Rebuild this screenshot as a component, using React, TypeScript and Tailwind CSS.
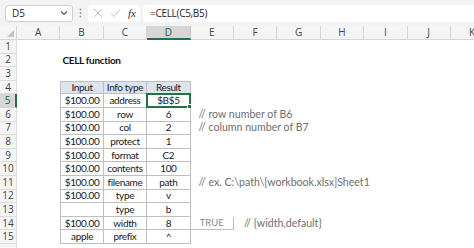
import React from "react";

const cols = ["A", "B", "C", "D", "E", "F", "G", "H", "I", "J", "K"];

type Row = {
  n: number;
  cells?: [string, string, string] | null;
  header?: boolean;
  e?: React.ReactNode;
  f?: React.ReactNode;
  title?: string;
};

const rows: Row[] = [
  { n: 1 },
  { n: 2, title: "CELL function" },
  { n: 3 },
  { n: 4, cells: ["Input", "Info type", "Result"], header: true },
  { n: 5, cells: ["$100.00", "address", "$B$5"] },
  { n: 6, cells: ["$100.00", "row", "6"], e: "// row number of B6" },
  { n: 7, cells: ["$100.00", "col", "2"], e: "// column number of B7" },
  { n: 8, cells: ["$100.00", "protect", "1"] },
  { n: 9, cells: ["$100.00", "format", "C2"] },
  { n: 10, cells: ["$100.00", "contents", "100"] },
  { n: 11, cells: ["$100.00", "filename", "path"], e: "// ex. C:\\path\\[workbook.xlsx]Sheet1" },
  { n: 12, cells: ["$100.00", "type", "v"] },
  { n: 13, cells: ["", "type", "b"] },
  { n: 14, cells: ["$100.00", "width", "8"], f: "// {width,default}" },
  { n: 15, cells: ["apple", "prefix", "^"] },
  { n: 16 },
];

const cellFont = { fontFamily: "Lato, 'Open Sans', sans-serif" };
const uiFont = { fontFamily: "'Open Sans', sans-serif" };

export default function App() {
  return (
    <div className="w-[474px] h-[248px] overflow-hidden bg-white relative" style={cellFont}>
      {/* formula bar */}
      <div className="h-[26px] bg-[#f3f3f3] flex items-center pl-[5px] gap-0">
        <div className="w-[68px] h-[17px] bg-white border border-[#d0d0d0] rounded-[3px] flex items-center justify-between pl-[6px] pr-[4px]">
          <span className="text-[10px] text-[#262626]" style={uiFont}>D5</span>
          <svg width="8" height="6" viewBox="0 0 8 6">
            <path d="M1 1.5 L4 4.5 L7 1.5" stroke="#555" strokeWidth="1.1" fill="none" />
          </svg>
        </div>
        <div className="w-[15px] flex justify-center">
          <svg width="3" height="10" viewBox="0 0 3 10">
            <circle cx="1.5" cy="1.5" r="0.9" fill="#999" />
            <circle cx="1.5" cy="5" r="0.9" fill="#999" />
            <circle cx="1.5" cy="8.5" r="0.9" fill="#999" />
          </svg>
        </div>
        <div className="w-[52px] h-[17px] bg-white rounded-[3px] flex items-center pl-[5px] gap-[7px]">
          <svg width="10" height="10" viewBox="0 0 10 10">
            <path d="M1 1 L9 9 M9 1 L1 9" stroke="#bdbdbd" strokeWidth="1" fill="none" />
          </svg>
          <svg width="11" height="10" viewBox="0 0 11 10">
            <path d="M1 5.5 L4 8.5 L10 1.5" stroke="#bdbdbd" strokeWidth="1" fill="none" />
          </svg>
          <span className="text-[11px] italic text-[#333] leading-none" style={{ fontFamily: "'Liberation Serif', serif" }}>
            fx
          </span>
        </div>
        <div className="ml-[3px] flex-1 h-[17px] bg-white rounded-l-[3px] flex items-center pl-[7px]">
          <span className="text-[10px] text-[#262626] tracking-[-0.3px]" style={uiFont}>
            =CELL(C5,B5)
          </span>
        </div>
      </div>

      {/* grid */}
      <div className="grid grid-cols-[17px_repeat(11,43.4px)] grid-rows-[14px] auto-rows-[13.6px]">
        {/* header row */}
        <div className="bg-[#f5f5f5] border-r border-b border-[#d6d6d6] relative">
          <svg className="absolute right-[2px] bottom-[2px]" width="7" height="7" viewBox="0 0 7 7">
            <path d="M7 0 L7 7 L0 7 Z" fill="#c4c4c4" />
          </svg>
        </div>
        {cols.map((c) =>
          c === "D" ? (
            <div
              key={c}
              className="bg-[#d6d6d6] border-r border-[#c8c8c8] border-b-2 border-b-[#217346] flex items-center justify-center text-[10px] text-[#1d5e36]"
              style={uiFont}
            >
              {c}
            </div>
          ) : (
            <div
              key={c}
              className="bg-[#f5f5f5] border-r border-b border-[#d6d6d6] flex items-center justify-center text-[10px] text-[#444]"
              style={uiFont}
            >
              {c}
            </div>
          )
        )}

        {rows.map((r) => {
          const active = r.n === 5;
          const out: React.ReactNode[] = [];
          out.push(
            <div
              key={`h${r.n}`}
              className={
                active
                  ? "bg-[#d6d6d6] border-b border-[#d6d6d6] border-r-2 border-r-[#217346] flex items-center justify-center text-[10px] text-[#1d5e36]"
                  : "bg-[#f5f5f5] border-r border-b border-[#dcdcdc] flex items-center justify-center text-[10px] text-[#444]"
              }
              style={uiFont}
            >
              {r.n < 16 ? r.n : ""}
            </div>
          );
          // A
          out.push(<div key={`a${r.n}`} />);
          // B C D
          if (r.cells) {
            r.cells.forEach((t, i) => {
              const isD = i === 2;
              const cls = [
                "relative flex items-center justify-center text-[10px] tracking-[-0.35px] text-[#1a1a1a] whitespace-nowrap border-r border-b border-[#bfbfbf]",
                i === 0 ? "border-l" : "",
                r.header ? "border-t bg-[#dde4ef]" : "",
              ].join(" ");
              out.push(
                <div key={`c${r.n}${i}`} className={cls}>
                  {t}
                  {active && isD && (
                    <div className="absolute -left-[1px] -top-[1px] -right-[1px] -bottom-[1px] border-2 border-[#217346]">
                      <div className="absolute -right-[3px] -bottom-[3px] w-[5px] h-[5px] bg-[#217346] border border-white" />
                    </div>
                  )}
                </div>
              );
            });
          } else if (r.title) {
            out.push(
              <div key={`t${r.n}`} className="col-span-3 flex items-center pl-[2px] text-[10px] tracking-[-0.3px] font-bold text-[#111] whitespace-nowrap">
                {r.title}
              </div>
            );
          } else {
            out.push(<div key={`b${r.n}`} />, <div key={`c${r.n}`} />, <div key={`d${r.n}`} />);
          }
          // E
          if (r.n === 14) {
            out.push(
              <div key={`e${r.n}`} className="flex items-center justify-center text-[9.5px] text-[#8a8a8a] border-r border-b border-[#bfbfbf]">
                TRUE
              </div>
            );
          } else if (r.e) {
            out.push(
              <div key={`e${r.n}`} className="flex items-center pl-[8px] text-[10.6px] text-[#6e6e6e] whitespace-nowrap overflow-visible">
                {r.e}
              </div>
            );
          } else {
            out.push(<div key={`e${r.n}`} />);
          }
          // F
          if (r.f) {
            out.push(
              <div key={`f${r.n}`} className="flex items-center pl-[10px] text-[10.6px] text-[#6e6e6e] whitespace-nowrap">
                {r.f}
              </div>
            );
          } else {
            out.push(<div key={`f${r.n}`} />);
          }
          for (const c of ["G", "H", "I", "J", "K"]) out.push(<div key={`${c}${r.n}`} />);
          return out;
        })}
      </div>
    </div>
  );
}
